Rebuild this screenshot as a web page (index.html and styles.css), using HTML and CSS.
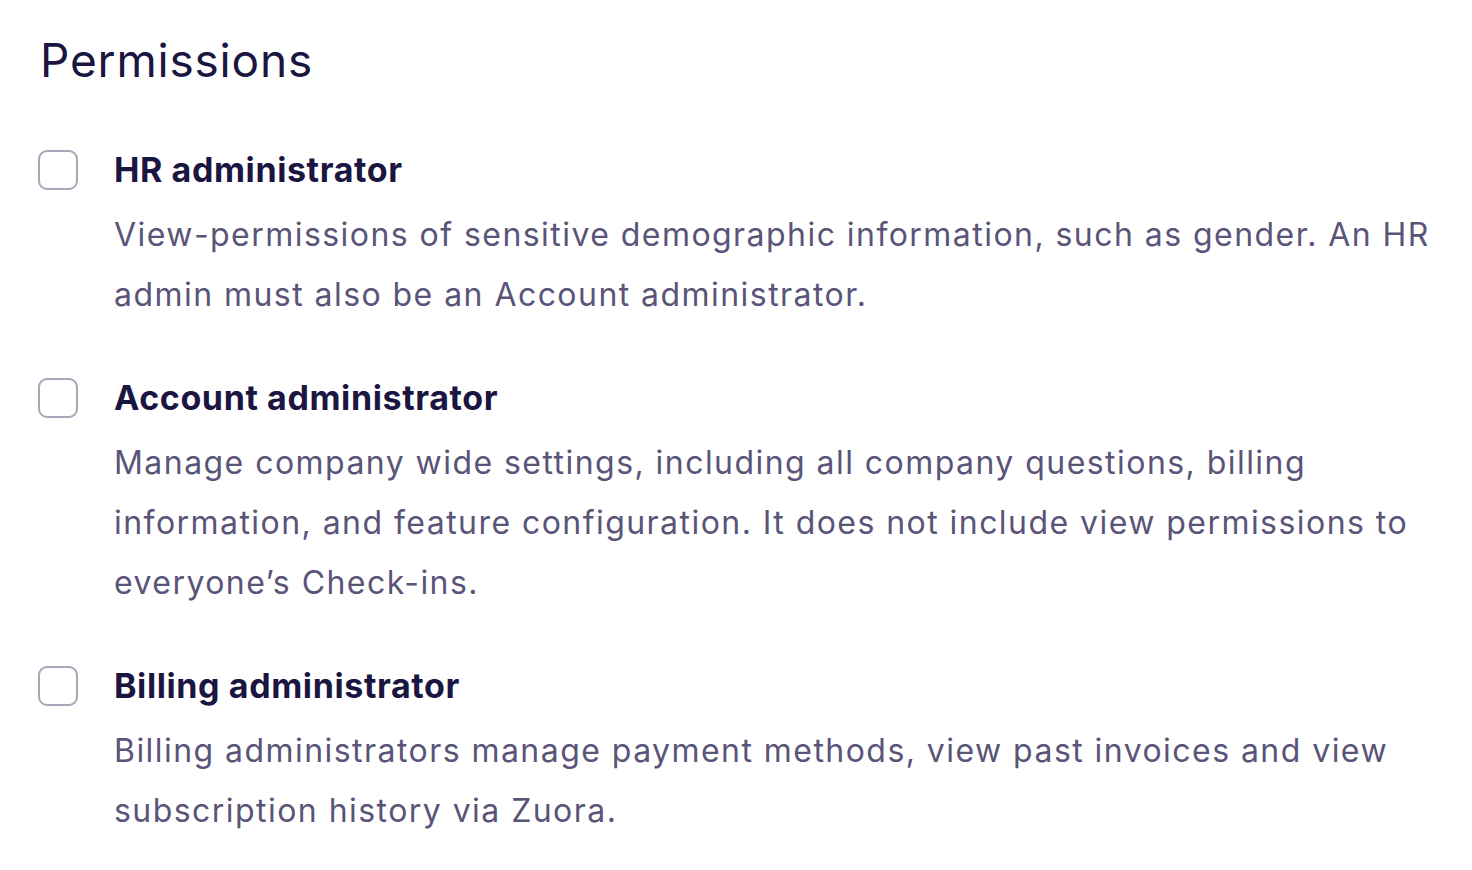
FILE: index.html
```html
<!DOCTYPE html>
<html lang="en">
<head>
    <meta charset="UTF-8">
    <title>Permissions</title>
    <link rel="stylesheet" href="styles.css">
</head>
<body>
    <section class="permissions">
        <h1 class="page-title">Permissions</h1>

        <ul class="perm-list">
            <li class="perm-item">
                <label class="perm-check"><input type="checkbox"><span class="box"></span></label>
                <div class="perm-body">
                    <div class="perm-name">HR administrator</div>
                    <p class="perm-desc">View-permissions of sensitive demographic information, such as gender. An HR admin must also be an Account administrator.</p>
                </div>
            </li>
            <li class="perm-item">
                <label class="perm-check"><input type="checkbox"><span class="box"></span></label>
                <div class="perm-body">
                    <div class="perm-name">Account administrator</div>
                    <p class="perm-desc">Manage company wide settings, including all company questions, billing information, and feature configuration. It does not include view permissions to everyone’s Check-ins.</p>
                </div>
            </li>
            <li class="perm-item">
                <label class="perm-check"><input type="checkbox"><span class="box"></span></label>
                <div class="perm-body">
                    <div class="perm-name">Billing administrator</div>
                    <p class="perm-desc">Billing administrators manage payment methods, view past invoices and view subscription history via Zuora.</p>
                </div>
            </li>
        </ul>
    </section>
</body>
</html>
```

FILE: styles.css
```css
:root {
    --ink: #1b1541;
    --muted: #5a5478;
    --box: #aaa6b9;
}

* { box-sizing: border-box; margin: 0; padding: 0; }

body {
    font-family: 'Inter', 'Liberation Sans', sans-serif;
    background: #fff;
    color: var(--ink);
}

.permissions {
    padding: 30px 20px 0 38px;
}

.page-title {
    font-size: 46px;
    font-weight: 400;
    line-height: 60px;
    letter-spacing: 0.8px;
    padding-left: 2px;
    margin-bottom: 60px;
}

.perm-list {
    list-style: none;
    display: flex;
    flex-direction: column;
    gap: 53px;
}

.perm-item {
    display: flex;
    gap: 36px;
}

.perm-check input { display: none; }

.perm-check .box {
    display: block;
    width: 40px;
    height: 40px;
    border: 2px solid var(--box);
    border-radius: 9px;
    cursor: pointer;
}

.perm-body {
    flex: 1;
    display: flex;
    flex-direction: column;
    gap: 15px;
}

.perm-name {
    font-size: 34px;
    font-weight: 700;
    line-height: 40px;
    letter-spacing: 0.6px;
}

.perm-desc {
    font-size: 32px;
    line-height: 60px;
    letter-spacing: 1.45px;
    color: var(--muted);
}
```
